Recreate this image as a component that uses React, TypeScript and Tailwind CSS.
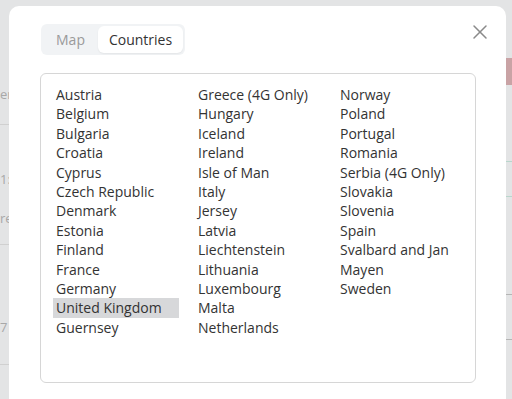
import React from 'react';
import { X } from 'lucide-react';

const columns: string[][] = [
  ['Austria', 'Belgium', 'Bulgaria', 'Croatia', 'Cyprus', 'Czech Republic', 'Denmark', 'Estonia', 'Finland', 'France', 'Germany', 'United Kingdom', 'Guernsey'],
  ['Greece (4G Only)', 'Hungary', 'Iceland', 'Ireland', 'Isle of Man', 'Italy', 'Jersey', 'Latvia', 'Liechtenstein', 'Lithuania', 'Luxembourg', 'Malta', 'Netherlands'],
  ['Norway', 'Poland', 'Portugal', 'Romania', 'Serbia (4G Only)', 'Slovakia', 'Slovenia', 'Spain', 'Svalbard and Jan', 'Mayen', 'Sweden'],
];

export default function App() {
  return (
    <div
      className="flex w-[512px] h-[399px] overflow-hidden bg-[#e3e4e5]"
      style={{ fontFamily: '"Open Sans", "Noto Sans", sans-serif' }}
    >
      {/* faded page behind the overlay, left edge */}
      <div className="w-[9px] shrink-0 flex flex-col text-[13px] leading-none text-[#a8a8a8] overflow-hidden">
        <div className="mt-[88px]">er</div>
        <div className="mt-[23px] h-px bg-[#d0d0d0]" />
        <div className="mt-[48px]">1:</div>
        <div className="mt-[26px]">re</div>
        <div className="mt-[19px] h-px bg-[#d0d0d0]" />
        <div className="mt-[76px]">7</div>
        <div className="mt-[30px] h-px bg-[#d0d0d0]" />
      </div>

      {/* Modal */}
      <div className="w-[497px] shrink-0 mt-[6px] h-[400px] bg-white rounded-t-[10px] pl-[31px] pr-[14px] pt-[18px]">
        <div className="flex items-start justify-between">
          {/* Tabs */}
          <div className="ml-[1px] flex h-[31px] items-center rounded-md bg-[#f1f3f5] p-[2px] text-[14px]">
            <div className="h-full w-[55px] flex items-center justify-center text-[#9a9a9a]">Map</div>
            <div className="h-full w-[85px] flex items-center justify-center rounded-md bg-white text-[#333] shadow-[0_1px_2px_rgba(0,0,0,0.06)]">
              Countries
            </div>
          </div>
          <button className="-mt-[4px] text-[#8a8a8a]">
            <X size={24} strokeWidth={1.5} />
          </button>
        </div>

        {/* Country list */}
        <div className="mt-[18px] w-[436px] h-[310px] rounded-md border border-[#d6d6d6] pl-[12px] pt-[11px]">
          <div className="flex gap-[16px]">
            {columns.map((col, i) => (
              <div key={i} className="w-[126px] flex flex-col">
                {col.map((name) => (
                  <div
                    key={name}
                    className={`px-[3px] text-[14px] leading-[19.4px] text-[#333] whitespace-nowrap ${
                      name === 'United Kingdom' ? 'bg-[#d7d8da]' : ''
                    }`}
                  >
                    {name}
                  </div>
                ))}
              </div>
            ))}
          </div>
        </div>
      </div>

      {/* faded page behind the overlay, right edge */}
      <div className="flex-1 flex flex-col">
        <div className="mt-[58px] h-[27px] bg-[#c9a3a5]" />
        <div className="mt-[76px] h-px bg-[#b9d6cc]" />
        <div className="mt-[34px] h-px bg-[#b9d6cc]" />
        <div className="mt-[97px] h-px bg-[#b5b5b5]" />
        <div className="mt-[44px] h-px bg-[#b5b5b5]" />
      </div>
    </div>
  );
}
